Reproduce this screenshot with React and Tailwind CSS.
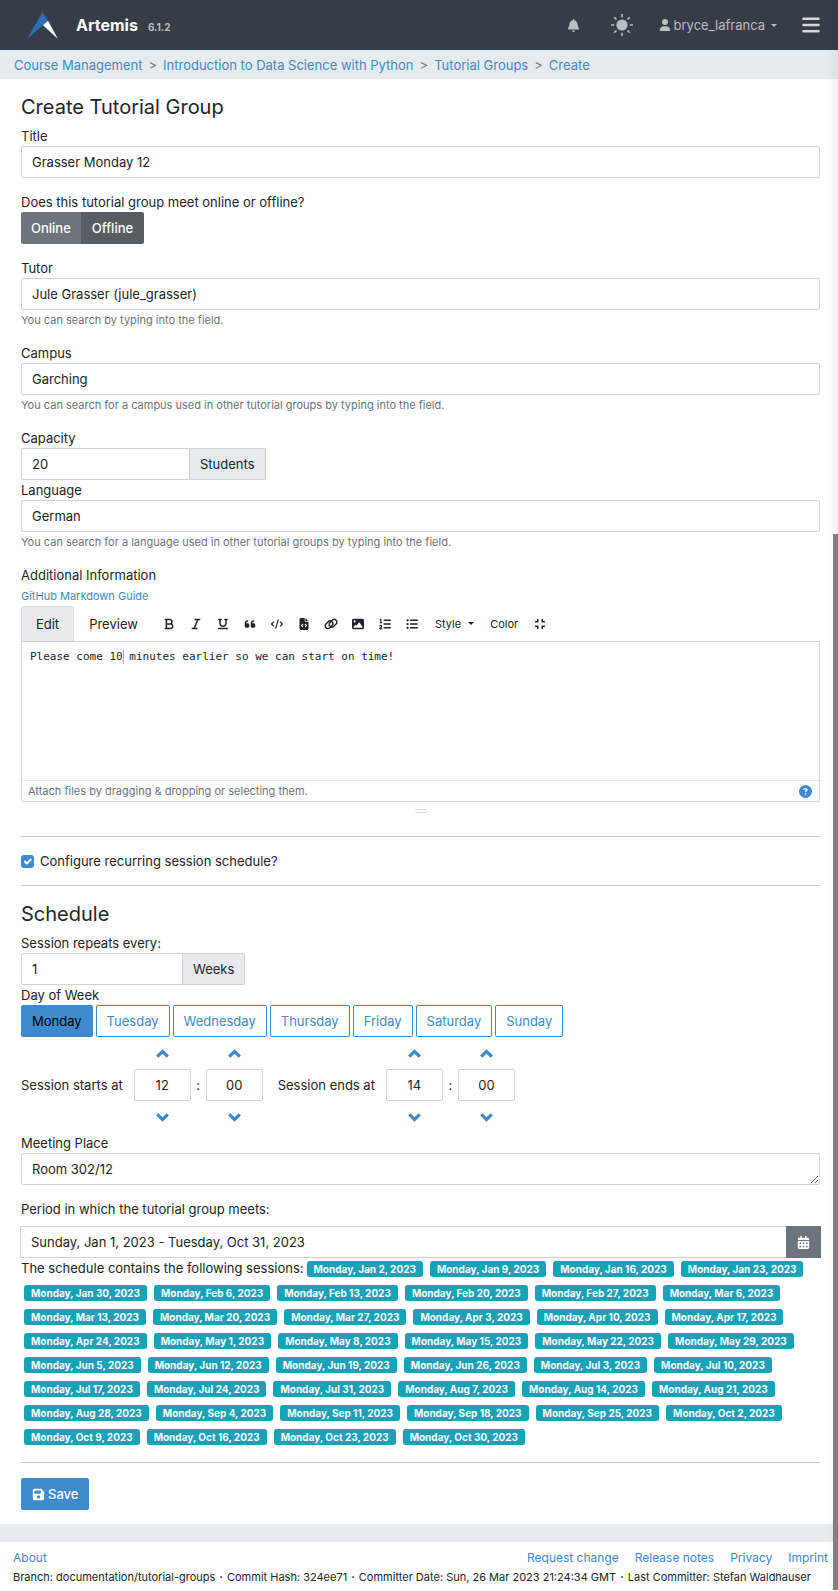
import {
  FaBars, FaBell, FaBold, FaCalendarDays, FaCircleQuestion, FaCode, FaCompress, FaFileCode,
  FaFloppyDisk, FaImage, FaItalic, FaListOl, FaListUl, FaQuoteLeft, FaUnderline, FaUser,
} from 'react-icons/fa6';

const link = 'text-[#3e8acc] hover:underline';
const label = 'block leading-5';
const field = 'block h-8 w-full min-w-0 rounded-[2px] border border-[#ced4da] bg-white px-[10px] leading-5 text-[#212529] outline-none';
const addon = 'flex h-8 items-center rounded-r-[2px] border border-l-0 border-[#ced4da] bg-[#e7ebee] px-[10px]';

const crumbs = ['Course Management', 'Introduction to Data Science with Python', 'Tutorial Groups', 'Create'];
const days = ['Monday', 'Tuesday', 'Wednesday', 'Thursday', 'Friday', 'Saturday', 'Sunday'];
const build = [
  'Branch: documentation/tutorial-groups', 'Commit Hash: 324ee71',
  'Committer Date: Sun, 26 Mar 2023 21:24:34 GMT', 'Last Committer: Stefan Waldhauser',
];
const sessions = [
  'Jan 2', 'Jan 9', 'Jan 16', 'Jan 23', 'Jan 30', 'Feb 6', 'Feb 13', 'Feb 20', 'Feb 27', 'Mar 6', 'Mar 13', 'Mar 20',
  'Mar 27', 'Apr 3', 'Apr 10', 'Apr 17', 'Apr 24', 'May 1', 'May 8', 'May 15', 'May 22', 'May 29', 'Jun 5', 'Jun 12',
  'Jun 19', 'Jun 26', 'Jul 3', 'Jul 10', 'Jul 17', 'Jul 24', 'Jul 31', 'Aug 7', 'Aug 14', 'Aug 21', 'Aug 28', 'Sep 4',
  'Sep 11', 'Sep 18', 'Sep 25', 'Oct 2', 'Oct 9', 'Oct 16', 'Oct 23', 'Oct 30',
];

function Chain({ className }) {
  return (
    <svg className={className} viewBox="0 0 14 12" fill="none" stroke="currentColor" strokeWidth="1.4" aria-hidden="true">
      <rect x="0.7" y="4" width="8.6" height="5.4" rx="2.7" transform="rotate(-45 5 6.7)" />
      <rect x="4.7" y="2.6" width="8.6" height="5.4" rx="2.7" transform="rotate(-45 9 5.3)" />
    </svg>
  );
}

const tools = [
  ['Bold', FaBold], ['Italic', FaItalic], ['Underline', FaUnderline], ['Quote', FaQuoteLeft], ['Code', FaCode],
  ['Code block', FaFileCode], ['Link', Chain], ['Image', FaImage], ['Ordered list', FaListOl], ['Unordered list', FaListUl],
];

function Logo() {
  return (
    <svg className="h-[27px] w-8" viewBox="0 0 32 27" aria-hidden="true">
      <path d="M15.5 0 21 8.8 16 13.2 0 27Z" fill="#2f6eb5" />
      <path d="M21 8.8 31 27 16 13.2Z" fill="#fff" />
    </svg>
  );
}

function Sun() {
  return (
    <svg className="size-[22px]" viewBox="0 0 22 22" stroke="currentColor" strokeWidth="1.6" aria-hidden="true">
      <circle cx="11" cy="11" r="5.6" fill="currentColor" stroke="none" />
      <path d="M11 0v3.2M11 18.8V22M0 11h3.2M18.8 11H22M3.2 3.2l2.3 2.3M16.5 16.5l2.3 2.3M18.8 3.2l-2.3 2.3M5.5 16.5l-2.3 2.3" />
    </svg>
  );
}

function Caret() {
  return (
    <svg className="h-[3px] w-[6px]" viewBox="0 0 6 3" fill="currentColor" aria-hidden="true">
      <path d="M0 0h6L3 3Z" />
    </svg>
  );
}

function Step({ down, name }) {
  return (
    <button type="button" aria-label={name} className="flex h-8 w-full items-center justify-center text-[#3e8acc]">
      <svg className="h-[9px] w-[13px]" viewBox="0 0 13 9" fill="none" stroke="currentColor" strokeWidth="3.2" aria-hidden="true">
        {down ? <path d="M1.2 1.3 6.5 6.5 11.8 1.3" /> : <path d="M1.2 7.7 6.5 2.5 11.8 7.7" />}
      </svg>
    </button>
  );
}

function TimeUnit({ name, value }) {
  return (
    <div className="w-[57px]">
      <Step name={'Increase ' + name} />
      <input aria-label={name} defaultValue={value} className={field + ' text-center'} />
      <Step down name={'Decrease ' + name} />
    </div>
  );
}

function TimePicker({ title, hour, minute }) {
  return (
    <div role="group" aria-label={title} className="flex items-center">
      <span className="mr-[11px]">{title}</span>
      <TimeUnit name={title + ' hour'} value={hour} />
      <span className="w-[15px] text-center">:</span>
      <TimeUnit name={title + ' minute'} value={minute} />
    </div>
  );
}

function Field({ id, title, value, help }) {
  return (
    <div>
      <label htmlFor={id} className={label}>{title}</label>
      <input id={id} defaultValue={value} className={field} />
      {help && <p className="mt-px text-[11px] leading-[18px] text-[#6c757d]">{help}</p>}
    </div>
  );
}

export default function App() {
  return (
    <div className="relative bg-white font-['Inter','Liberation_Sans',sans-serif] text-[13px] leading-5 text-[#212529]">
      <header className="flex h-[50px] items-center bg-[#353d47] pr-[17px] pl-[27px] text-[#bcbfc2]">
        <Logo />
        <a href="#" className="ml-[17px] text-base font-bold text-white">Artemis</a>
        <span className="mt-[3px] ml-[10px] text-[10px] font-bold">6.1.2</span>
        <nav className="ml-auto flex items-center">
          <button type="button" aria-label="Notifications"><FaBell className="size-[13px]" /></button>
          <button type="button" aria-label="Toggle theme" className="ml-[31px]"><Sun /></button>
          <button type="button" className="ml-[26px] flex items-center gap-[3px]">
            <FaUser className="size-[12px]" />
            <span>bryce_lafranca</span>
            <span className="ml-[3px]"><Caret /></span>
          </button>
          <button type="button" aria-label="Menu" className="ml-6 text-[#d7d8da]"><FaBars className="size-5" /></button>
        </nav>
      </header>

      <nav aria-label="Breadcrumb" className="bg-[#e7ebee] pr-4 pl-[14px]">
        <ol className="flex h-[29px] items-center">
          {crumbs.map((c, i) => (
            <li key={c} className="flex">
              {i > 0 && <span className="px-[6px] text-[#6c757d]">&gt;</span>}
              <a href="#" className={link}>{c}</a>
            </li>
          ))}
        </ol>
      </nav>

      <main className="pt-[14px] pr-[18px] pb-[14px] pl-[21px]">
        <form onSubmit={(e) => e.preventDefault()}>
          <h1 className="mb-[5px] text-xl leading-7">Create Tutorial Group</h1>
          <Field id="title" title="Title" value="Grasser Monday 12" />

          <fieldset className="mt-[14px]">
            <legend className={label}>Does this tutorial group meet online or offline?</legend>
            <div className="flex font-medium text-white">
              <button type="button" className="h-8 rounded-l-[2px] bg-[#6c757d] px-[10px]">Online</button>
              <button type="button" aria-pressed="true" className="h-8 rounded-r-[2px] bg-[#565e64] px-[11px]">Offline</button>
            </div>
          </fieldset>

          <div className="mt-[14px] flex flex-col gap-[14px]">
            <Field id="tutor" title="Tutor" value="Jule Grasser (jule_grasser)" help="You can search by typing into the field." />
            <Field id="campus" title="Campus" value="Garching" help="You can search for a campus used in other tutorial groups by typing into the field." />
            <div>
              <label htmlFor="capacity" className={label}>Capacity</label>
              <div className="flex">
                <input id="capacity" defaultValue="20" className="h-8 w-[169px] rounded-l-[2px] border border-[#ced4da] px-[10px] outline-none" />
                <span className={addon}>Students</span>
              </div>
              <Field id="language" title="Language" value="German" help="You can search for a language used in other tutorial groups by typing into the field." />
            </div>
          </div>

          <div className="mt-[14px]">
            <label htmlFor="info" className={label}>Additional Information</label>
            <a href="#" className={link + ' mt-px block text-[11px] leading-5'}>GitHub Markdown Guide</a>
            <div className="flex h-[35px] items-center">
              <button type="button" className="h-full w-[53px] rounded-t-[2px] border border-b-0 border-[#dee2e6] bg-[#e7ebee]">Edit</button>
              <button type="button" className="w-[79px]">Preview</button>
              <div className="flex items-center pl-[2px] text-[11px]">
                {tools.map(([name, Icon]) => (
                  <button key={name} type="button" aria-label={name} className="flex w-[27px] justify-center">
                    <Icon className="h-3 w-auto" />
                  </button>
                ))}
                <button type="button" className="ml-[10px] flex items-center gap-[7px]">Style <Caret /></button>
                <button type="button" className="ml-4">Color</button>
                <button type="button" aria-label="Exit full screen" className="ml-4"><FaCompress className="size-3" /></button>
              </div>
            </div>
            <div className="relative rounded-b-[2px] border border-[#ced4da]">
              <textarea
                id="info"
                defaultValue="Please come 10 minutes earlier so we can start on time!"
                className="block h-[138px] w-full resize-none px-2 pt-[6px] font-['DejaVu_Sans_Mono',monospace] text-[11px] leading-[18px] outline-none"
              />
              <span className="pointer-events-none absolute top-2 left-[101px] h-[14px] w-px bg-[#a8a8a8]" />
              <div className="flex h-[21px] items-center justify-between border-t border-dotted border-[#ced4da] pr-[7px] pl-[6px] text-[11px] text-[#6c757d]">
                <span>Attach files by dragging &amp; dropping or selecting them.</span>
                <button type="button" aria-label="Help" className="text-[#3e8acc]"><FaCircleQuestion className="size-[13px]" /></button>
              </div>
            </div>
            <div className="mx-auto mt-[7px] h-1 w-[11px] border-y border-[#d5d5d5]" />
          </div>

          <hr className="mt-[23px] border-[#c8c9ca]" />
          <label className="flex h-12 items-center gap-[6px]">
            <span className="relative flex">
              <input type="checkbox" defaultChecked className="size-[13px] appearance-none rounded-[3px] bg-[#3e8acc]" />
              <svg className="pointer-events-none absolute inset-0 size-[13px]" viewBox="0 0 20 20" fill="none" stroke="#fff" strokeWidth="3" strokeLinecap="round" strokeLinejoin="round" aria-hidden="true">
                <path d="m6 10 3 3 6-6" />
              </svg>
            </span>
            Configure recurring session schedule?
          </label>
          <hr className="border-[#c8c9ca]" />

          <h2 className="mt-[14px] mb-[5px] text-xl leading-7">Schedule</h2>
          <label htmlFor="weeks" className={label}>Session repeats every:</label>
          <div className="flex">
            <input id="weeks" defaultValue="1" className="h-8 w-[162px] rounded-l-[2px] border border-[#ced4da] px-[10px] outline-none" />
            <span className={addon}>Weeks</span>
          </div>
          <fieldset>
            <legend className={label}>Day of Week</legend>
            <div className="flex flex-wrap gap-[3px]">
              {days.map((d, i) => (
                <button key={d} type="button" aria-pressed={i === 0} className={'h-8 rounded-[2px] border border-[#3e8acc] px-[10px] ' + (i === 0 ? 'bg-[#3e8acc] text-black' : 'text-[#3e8acc]')}>{d}</button>
              ))}
            </div>
          </fieldset>
          <div className="flex gap-[15px]">
            <TimePicker title="Session starts at" hour="12" minute="00" />
            <TimePicker title="Session ends at" hour="14" minute="00" />
          </div>
          <label htmlFor="place" className={label}>Meeting Place</label>
          <textarea id="place" rows={1} defaultValue="Room 302/12" className={field + ' resize-y overflow-hidden py-[5px]'} />

          <label htmlFor="period" className="mt-[14px] block leading-5">Period in which the tutorial group meets:</label>
          <div className="mt-[7px] -mr-px -ml-px flex">
            <input id="period" defaultValue="Sunday, Jan 1, 2023 - Tuesday, Oct 31, 2023" className="h-8 min-w-0 flex-1 border border-r-0 border-[#ced4da] px-[10px] outline-none" />
            <button type="button" aria-label="Open calendar" className="flex h-8 w-[35px] items-center justify-center bg-[#6c757d] text-white">
              <FaCalendarDays className="size-[13px]" />
            </button>
          </div>
          <div className="flex flex-wrap gap-y-1">
            <span>The schedule contains the following sessions:</span>
            {sessions.map((s) => (
              <span key={s} className="mr-1 ml-[3px] flex h-5 items-end pb-px">
                <span className="h-4 rounded-[3px] bg-[#17a2b8] px-[7px] text-[10px] leading-4 font-bold text-white">{'Monday, ' + s + ', 2023'}</span>
              </span>
            ))}
          </div>
          <hr className="mt-4 mb-[15px] border-[#c8c9ca]" />
          <button type="submit" className="flex h-8 items-center gap-[3px] rounded-[2px] bg-[#3e8acc] px-[11px] font-medium text-white">
            <FaFloppyDisk className="size-[13px]" />
            Save
          </button>
        </form>
      </main>

      <footer className="border-t-[18px] border-[#e7ebee] pt-[6px] pr-[10px] pb-1 pl-[13px]">
        <div className="flex text-xs leading-5">
          <a href="#" className={link}>About</a>
          <div className="ml-auto flex gap-4">
            {['Request change', 'Release notes', 'Privacy', 'Imprint'].map((t) => <a key={t} href="#" className={link}>{t}</a>)}
          </div>
        </div>
        <p className="flex flex-wrap text-[11px] leading-[18px]">
          {build.map((t, i) => (
            <span key={t}>
              {i > 0 && <span className="px-1 font-bold">·</span>}
              {t}
            </span>
          ))}
        </p>
      </footer>

      <div className="pointer-events-none absolute inset-y-0 right-0 w-3 bg-linear-to-r from-transparent to-black/5" />
      <div className="pointer-events-none absolute top-[534px] right-0 bottom-0 w-[5px] bg-[#808080]" />
    </div>
  );
}
